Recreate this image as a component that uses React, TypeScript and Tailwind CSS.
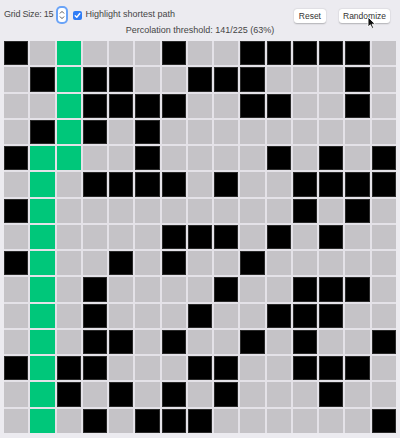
import { useState } from 'react';

const N = 15;

// 1 = blocked cell, 0 = open
const BLOCKED: number[][] = [
  [1, 0, 0, 0, 0, 0, 1, 0, 0, 1, 1, 1, 1, 1, 0],
  [0, 1, 0, 1, 1, 0, 0, 1, 1, 1, 0, 0, 0, 1, 0],
  [0, 0, 0, 1, 1, 1, 1, 0, 0, 1, 1, 0, 0, 1, 0],
  [0, 1, 0, 1, 0, 1, 0, 0, 0, 0, 0, 0, 0, 0, 0],
  [1, 0, 0, 0, 0, 1, 0, 0, 0, 0, 1, 0, 1, 0, 1],
  [0, 0, 0, 1, 1, 1, 1, 0, 1, 0, 0, 1, 1, 1, 1],
  [1, 0, 0, 0, 0, 0, 0, 0, 0, 0, 0, 1, 0, 1, 0],
  [0, 0, 0, 0, 0, 0, 1, 1, 1, 0, 1, 0, 1, 0, 0],
  [1, 0, 0, 0, 1, 0, 1, 0, 0, 1, 0, 0, 0, 0, 0],
  [0, 0, 0, 1, 0, 0, 0, 0, 1, 0, 0, 1, 1, 1, 0],
  [0, 0, 0, 1, 0, 0, 0, 1, 0, 0, 1, 1, 1, 0, 0],
  [0, 0, 0, 1, 1, 0, 1, 0, 0, 1, 0, 1, 0, 0, 1],
  [1, 0, 1, 1, 0, 0, 0, 1, 1, 0, 0, 1, 1, 1, 0],
  [0, 0, 1, 0, 1, 0, 1, 0, 1, 0, 0, 0, 1, 0, 0],
  [0, 0, 0, 1, 0, 1, 1, 1, 0, 0, 0, 0, 0, 0, 1],
];

const PATH = new Set<string>([
  '0-2', '1-2', '2-2', '3-2', '4-2', '4-1',
  '5-1', '6-1', '7-1', '8-1', '9-1', '10-1', '11-1', '12-1', '13-1', '14-1',
]);

function Stepper() {
  return (
    <div className="ml-[3px] flex h-[18px] w-[12px] items-center justify-center rounded-[5px] bg-[#6aa3f7] p-[2px]">
      <div className="flex h-full w-full flex-col items-center justify-center rounded-[3px] bg-white">
        <svg width="6" height="12" viewBox="0 0 6 12" fill="none" stroke="#555" strokeWidth="1" strokeLinecap="round" strokeLinejoin="round">
          <path d="M1.2 4.2 L3 2.4 L4.8 4.2" />
          <path d="M1.2 7.8 L3 9.6 L4.8 7.8" />
        </svg>
      </div>
    </div>
  );
}

function Checkbox({ checked }: { checked: boolean }) {
  return (
    <div className="ml-[5px] flex h-[9px] w-[9px] items-center justify-center rounded-[2px] bg-[#2f7cf6]">
      {checked && (
        <svg width="7" height="7" viewBox="0 0 7 7" fill="none" stroke="white" strokeWidth="1.4" strokeLinecap="round" strokeLinejoin="round">
          <path d="M1.2 3.7 L2.8 5.3 L5.8 1.5" />
        </svg>
      )}
    </div>
  );
}

function Cursor() {
  return (
    <svg className="absolute left-[367px] top-[16px]" width="10" height="14" viewBox="0 0 10 14">
      <path d="M1 1 L1 11 L3.4 8.8 L5 12.4 L6.6 11.7 L5.1 8.2 L8.3 8.2 Z" fill="#111" stroke="white" strokeWidth="0.9" strokeLinejoin="round" />
    </svg>
  );
}

export default function App() {
  const [highlight] = useState(true);
  const open = BLOCKED.flat().filter(v => v === 0).length;
  const pct = Math.round((open / (N * N)) * 100);

  return (
    <div className="relative h-[438px] w-[400px] overflow-hidden bg-[#ecebf0] font-['Liberation_Sans',Arial,sans-serif] text-[9px] text-[#454545]">
      <div className="flex h-[24px] items-center justify-between pl-[4px] pr-[10px] pt-[6px]">
        <div className="flex items-center">
          <span className="tracking-[-0.2px]">Grid Size: {N}</span>
          <Stepper />
          <Checkbox checked={highlight} />
          <span className="ml-[3px]">Highlight shortest path</span>
        </div>
        <div className="flex items-center gap-[13px] pt-[2px]">
          <button className="h-[14px] rounded-[3px] bg-white px-[5px] text-[8.5px] leading-[14px] text-[#333] shadow-[0_0.5px_1.5px_rgba(0,0,0,0.25)]">
            Reset
          </button>
          <button className="h-[14px] rounded-[3px] bg-white px-[4px] text-[8.5px] leading-[14px] text-[#333] shadow-[0_0.5px_1.5px_rgba(0,0,0,0.25)]">
            Randomize
          </button>
        </div>
      </div>

      <div className="h-[12px] text-center leading-[12px]">
        Percolation threshold: {open}/{N * N} ({pct}%)
      </div>

      <div className="ml-[4px] mt-[5px] grid w-[392px] grid-cols-[repeat(15,1fr)] gap-[2px] bg-[#e4e2e8]">
        {BLOCKED.map((row, r) =>
          row.map((v, c) => {
            const onPath = highlight && PATH.has(`${r}-${c}`);
            return (
              <div
                key={`${r}-${c}`}
                className={
                  'aspect-square ' +
                  (v === 1
                    ? 'bg-black border border-[#2a2a2a]'
                    : onPath
                      ? 'bg-[#00c77a]'
                      : 'bg-[#c5c3c7]')
                }
              />
            );
          })
        )}
      </div>

      <Cursor />
    </div>
  );
}
